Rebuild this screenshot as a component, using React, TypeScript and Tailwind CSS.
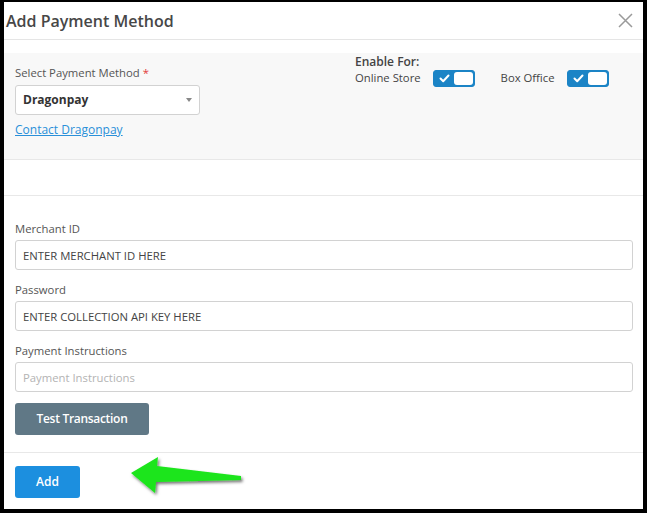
import React from "react";

const font = { fontFamily: '"Open Sans", "Noto Sans", sans-serif' };

function Toggle() {
  return (
    <div className="relative flex h-[17px] w-[42px] items-center rounded-[3px] border border-[#1b84c6] bg-[#1b84c6]">
      <svg className="ml-[5px]" width="11" height="9" viewBox="0 0 11 9">
        <polyline points="1.5,4.5 4.2,7.2 9.5,1.5" fill="none" stroke="#ffffff" strokeWidth="2" strokeLinecap="round" strokeLinejoin="round" />
      </svg>
      <div className="absolute right-[1px] top-[1px] h-[13px] w-[19px] rounded-[3px] bg-white" />
    </div>
  );
}

function Field({ label, value, placeholder, first }: { label: string; value?: string; placeholder?: string; first?: boolean }) {
  return (
    <div className={first ? "" : "mt-[12px]"}>
      <div className="h-[16px] text-[11.3px] leading-[16px] text-[#555]">{label}</div>
      <div className="mt-[3px] flex h-[30px] items-center rounded-[3px] border border-[#d2d2d2] bg-white pl-[7px]">
        {value ? (
          <span className="pt-[2px] text-[11.3px] text-[#444]">{value}</span>
        ) : (
          <span className="pt-[2px] text-[11.3px] text-[#b3b3b3]">{placeholder}</span>
        )}
      </div>
    </div>
  );
}

export default function App() {
  return (
    <div className="h-[513px] w-[647px] bg-black pb-[4px] pl-[4px] pr-[4px] pt-[2px]" style={font}>
      <div className="relative flex h-full flex-col bg-white">
        {/* Header */}
        <div className="flex h-[38px] items-center justify-between border-b border-[#e5e5e5] pl-[2px] pr-[10px]">
          <div className="text-[16px] font-semibold leading-none text-[#474747]">Add Payment Method</div>
          <svg width="15" height="15" viewBox="0 0 15 15">
            <path d="M1 1 L14 14 M14 1 L1 14" stroke="#9a9a9a" strokeWidth="1.5" fill="none" />
          </svg>
        </div>
        <div className="h-[13px]" />
        {/* Gray panel */}
        <div className="flex h-[107px] border-b border-[#e8e8e8] bg-[#f8f8f8]">
          <div className="w-[351px] pl-[11px] pt-[12px]">
            <div className="text-[11.3px] leading-[16px] text-[#555]">
              Select Payment Method <span className="text-[#e23b3b]">*</span>
            </div>
            <div className="mt-[4px] flex h-[30px] w-[185px] items-center justify-between rounded-[3px] border border-[#d2d2d2] bg-white pl-[7px] pr-[7px]">
              <span className="text-[12px] font-bold text-[#333]">Dragonpay</span>
              <svg width="6" height="4" viewBox="0 0 6 4">
                <polygon points="0,0 6,0 3,4" fill="#888" />
              </svg>
            </div>
            <div className="mt-[7px] text-[12px] leading-[16px] text-[#2a90d9] underline">Contact Dragonpay</div>
          </div>
          <div className="flex flex-col">
            <div className="h-[16px] pt-[1px] text-[12px] font-semibold leading-[16px] text-[#444]">Enable For:</div>
            <div className="mt-[1px] flex h-[17px] items-center">
              <span className="text-[11.3px] text-[#444]">Online Store</span>
              <div className="ml-[12px]">
                <Toggle />
              </div>
              <span className="ml-[26px] text-[11.3px] text-[#444]">Box Office</span>
              <div className="ml-[12px]">
                <Toggle />
              </div>
            </div>
          </div>
        </div>
        <div className="h-[36px] border-b border-[#e8e8e8]" />
        {/* Fields */}
        <div className="border-b border-[#e8e8e8] pb-[17px] pl-[11px] pr-[10px] pt-[25px]">
          <Field label="Merchant ID" value="ENTER MERCHANT ID HERE" first />
          <Field label="Password" value="ENTER COLLECTION API KEY HERE" />
          <Field label="Payment Instructions" placeholder="Payment Instructions" />
          <button className="mt-[11px] flex h-[32px] w-[134px] items-center justify-center rounded-[3px] bg-[#607886] text-[12px] font-semibold tracking-[-0.3px] text-white">
            Test Transaction
          </button>
        </div>
        {/* Footer */}
        <div className="pl-[11px] pt-[13px]">
          <button className="flex h-[32px] w-[65px] items-center justify-center rounded-[3px] bg-[#1c8fdf] text-[12px] font-semibold text-white">
            Add
          </button>
        </div>
        {/* Annotation arrow */}
        <svg className="pointer-events-none absolute left-0 top-0" width="639" height="507" viewBox="0 0 639 507">
          <defs>
            <filter id="sh" x="-20%" y="-50%" width="140%" height="200%">
              <feDropShadow dx="1.5" dy="2" stdDeviation="1.5" floodColor="#000" floodOpacity="0.55" />
            </filter>
          </defs>
          <polygon
            points="127,471 154,455 153,464 237,474 237,478 152,480 151,491"
            fill="#1be51b"
            filter="url(#sh)"
          />
        </svg>
      </div>
    </div>
  );
}
